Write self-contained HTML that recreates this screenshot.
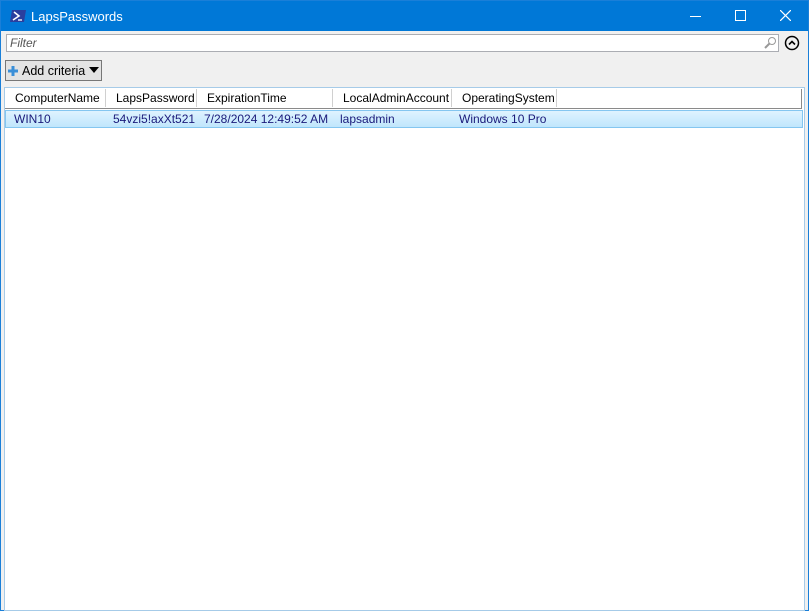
<!DOCTYPE html><html><head><style>
body{margin:0;width:809px;height:611px;overflow:hidden;font-family:"Liberation Sans",sans-serif;font-size:12px;position:relative;background:#f0f0f0}
.win{position:absolute;left:0;top:0;width:807px;height:609px;border:1px solid #1a7fd8;background:#f0f0f0}
.title{position:absolute;left:0;top:0;width:807px;height:30px;background:#0078d7;color:#fff}
.abs{position:absolute}
.hdr span{position:absolute;top:0;height:18px;line-height:18px;border-right:1px solid #d0d0d0;padding-left:10px;box-sizing:border-box;color:#000}
.row span{position:absolute;top:0;line-height:16px;color:#1a1a7a}
</style></head><body><div class="win">
<div class="title">
<svg class="abs" style="left:9px;top:8px" width="16" height="14"><path d="M2 1h14l-2 12H0z" fill="#2a3f9e"/><path d="M4 3l5 4-6 4" stroke="#fff" stroke-width="1.6" fill="none"/><path d="M8 11h4" stroke="#fff" stroke-width="1.3"/></svg>
<div class="abs" style="left:30px;top:8px;font-size:13px">LapsPasswords</div>
<div class="abs" style="left:689px;top:15px;width:11px;height:1px;background:#fff"></div>
<div class="abs" style="left:734px;top:9px;width:9px;height:9px;border:1px solid #fff"></div>
<svg class="abs" style="left:779px;top:9px" width="11" height="11"><path d="M0 0L11 11M11 0L0 11" stroke="#fff" stroke-width="1.2"/></svg>
</div>
<div class="abs" style="left:5px;top:33px;width:771px;height:16px;background:#fff;border:1px solid #abadb3"><span style="position:absolute;left:3px;top:1px;font-style:italic;color:#555">Filter</span>
<svg class="abs" style="left:756px;top:1px" width="14" height="14"><circle cx="9" cy="5" r="3.5" stroke="#999" fill="none"/><path d="M6.5 7.5L2 12" stroke="#999" stroke-width="2"/></svg></div>
<svg class="abs" style="left:783px;top:34px" width="16" height="16"><circle cx="8" cy="8" r="6.5" stroke="#000" stroke-width="1.5" fill="none"/><path d="M5 9.5L8 6.5L11 9.5" stroke="#000" stroke-width="1.6" fill="none"/></svg>
<div class="abs" style="left:4px;top:59px;width:97px;height:21px;border:1px solid #777;background:#e3e3e3;box-sizing:border-box">
<svg class="abs" style="left:2px;top:5px" width="10" height="10"><path d="M5 0v10M0 5h10" stroke="#3a8fd8" stroke-width="3"/></svg>
<span class="abs" style="left:16px;top:3px;font-size:12.5px">Add criteria</span>
<svg class="abs" style="left:83px;top:6px" width="10" height="6"><path d="M0 0h10L5 6z"/></svg></div>
<div class="abs" style="left:3px;top:86px;width:799px;height:522px;border:1px solid #a6cbe8;background:#fff">
<div class="hdr abs" style="left:0;top:1px;width:796px;height:19px;border-bottom:1px solid #8a8a8a;border-right:1px solid #8a8a8a">
<span style="left:0;width:101px">ComputerName</span><span style="left:101px;width:91px">LapsPassword</span><span style="left:192px;width:136px">ExpirationTime</span><span style="left:328px;width:119px">LocalAdminAccount</span><span style="left:447px;width:105px">OperatingSystem</span></div>
<div class="row abs" style="left:0;top:22px;width:796px;height:16px;background:linear-gradient(#dff3ff,#c0e6fc);border:1px solid #84c6f0">
<span style="left:8px">WIN10</span><span style="left:107px">54vzi5!axXt521</span><span style="left:198px">7/28/2024 12:49:52 AM</span><span style="left:334px">lapsadmin</span><span style="left:453px">Windows 10 Pro</span></div>
</div></div></body></html>
